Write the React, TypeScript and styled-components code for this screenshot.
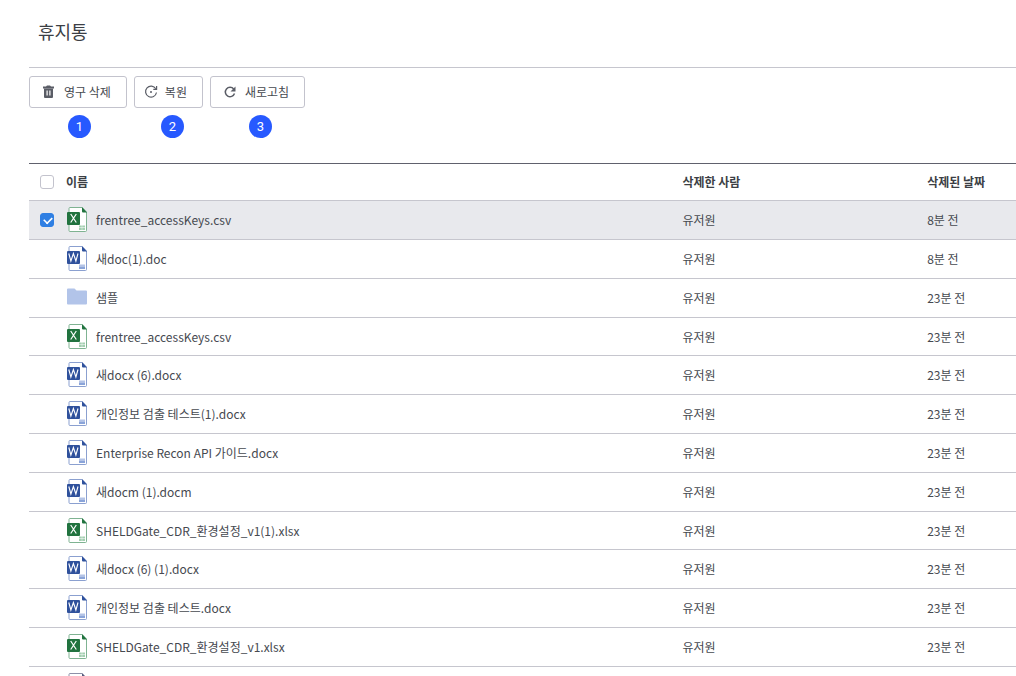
import React, { useState } from "react";
import styled, { createGlobalStyle } from "styled-components";

const GlobalStyle = createGlobalStyle`
  * { box-sizing: border-box; }
  body {
    margin: 0;
    background: #fff;
    color: #464950;
    font-family: "Noto Sans CJK KR", "Noto Sans", sans-serif;
    font-size: 12px;
    line-height: 20px;
  }
`;

const Page = styled.main`
  height: 100vh;
  overflow: hidden;
  padding-left: 29px;
`;

const Header = styled.header`
  height: 68px;
  padding: 17px 9px 0;
  border-bottom: 1px solid #c6c6ce;
`;

const Title = styled.h1`
  margin: 0;
  font-size: 18px;
  font-weight: 400;
  line-height: 28px;
  color: #3c3f45;
`;

const Toolbar = styled.div`
  display: flex;
  gap: 7px;
  padding: 8px 0 55px;
`;

const Action = styled.div`
  position: relative;
`;

const ActionButton = styled.button<{ $inset: number; $gap: number }>`
  display: flex;
  align-items: center;
  gap: ${(p) => p.$gap}px;
  height: 32px;
  padding: 0 15px 0 ${(p) => p.$inset}px;
  border: 1px solid #c3c3cd;
  border-radius: 3px;
  background: #fff;
  color: #464950;
  font: inherit;
  white-space: nowrap;
  cursor: pointer;
`;

const StepBadge = styled.span<{ $left: number }>`
  position: absolute;
  top: 39px;
  left: ${(p) => p.$left}px;
  width: 23px;
  height: 23px;
  border-radius: 50%;
  background: #2759ff;
  color: #fff;
  font-family: Roboto, sans-serif;
  font-size: 13px;
  line-height: 23px;
  text-align: center;
`;

const Table = styled.table`
  width: 100%;
  table-layout: fixed;
  border-collapse: separate;
  border-spacing: 0;
  border-top: 1px solid #60616d;
`;

const HeadCell = styled.th`
  height: 37px;
  padding: 0;
  border-bottom: 1px solid #c6c6ce;
  text-align: left;
  font-weight: 700;
  color: #3c3f45;
`;

const Row = styled.tr<{ $selected: boolean }>`
  height: 39px;
  background: ${(p) => (p.$selected ? "#e8e9ed" : "#fff")};

  &:nth-child(5n + 4) {
    height: 38px;
  }
`;

const Cell = styled.td`
  padding: 0;
  border-bottom: 1px solid #c6c6ce;
  white-space: nowrap;
`;

const NameContent = styled.div`
  display: flex;
  align-items: center;
  gap: 9px;
  padding-left: 1px;
`;

const Check = styled.input<{ $hidden?: boolean }>`
  appearance: none;
  display: block;
  width: 14px;
  height: 14px;
  margin: 0 0 0 11px;
  border: 1px solid #c3c3cd;
  border-radius: 3px;
  background: #fff;
  opacity: ${(p) => (p.$hidden ? 0 : 1)};

  &:checked {
    border-color: #2f7fe3;
    background: #2f7fe3;
  }
  &:checked::after {
    content: "";
    display: block;
    width: 8px;
    height: 5px;
    margin: 2px;
    border: solid #fff;
    border-width: 0 0 2px 2px;
    transform: rotate(-45deg) scale(0.8);
  }
`;

const TrashIcon = () => (
  <svg width="13" height="14" viewBox="0 0 13 14" aria-hidden="true">
    <path d="M1 1.500h3l1-1h3l1 1h3v2H1z" fill="#5a5d66" />
    <path
      fillRule="evenodd"
      d="M2 3.500h9V12q0 1-1 1H3q-1 0-1-1zM4.500 5.500v5h1.200v-5zM7.300 5.500v5h1.200v-5z"
      fill="#5a5d66"
    />
  </svg>
);

const RestoreIcon = () => (
  <svg width="14" height="14" viewBox="0 0 14 14" fill="none" stroke="#5a5d66" aria-hidden="true">
    <path d="M11.800 3.700A5.500 5.500 0 1 0 12.500 7.500" strokeWidth="1.200" />
    <path d="M12.600 1v3.300H9.300" strokeWidth="1.200" />
    <circle cx="7" cy="7" r="1" fill="#5a5d66" stroke="none" />
  </svg>
);

const RefreshIcon = () => (
  <svg width="14" height="14" viewBox="0 0 14 14" fill="none" aria-hidden="true">
    <path d="M10.700 4A4.700 4.700 0 1 0 11.500 8.500" stroke="#5a5d66" strokeWidth="1.500" />
    <path d="M12.500 1.500v5h-5z" fill="#5a5d66" />
  </svg>
);

const FileIcon = styled.svg`
  display: block;
  flex: none;
`;

type Kind = "excel" | "word" | "folder" | "other";

const palette = {
  excel: { main: "#21733f", edge: "#7fb392" },
  word: { main: "#2f519c", edge: "#8ba0d0" },
  other: { main: "#565b7c", edge: "#8d90a8" },
};

const TypeIcon = ({ kind }: { kind: Kind }) => {
  if (kind === "folder") {
    return (
      <FileIcon width="20" height="26" viewBox="0 0 20 26" aria-hidden="true">
        <path d="M0 4.500q0-1 1-1h6.500l2 2H19q1 0 1 1V18.500q0 1-1 1H1q-1 0-1-1z" fill="#b2c4e9" />
      </FileIcon>
    );
  }
  const { main, edge } = palette[kind];
  return (
    <FileIcon width="20" height="26" viewBox="0 0 20 26" aria-hidden="true">
      <path d="M3 .5H15L19.500 5V23.500q0 1-1 1H3q-1 0-1-1V1.500q0-1 1-1z" fill="#fff" stroke={edge} />
      <path d="M15 0l5 5.500h-4q-1 0-1-1z" fill={main} />
      <rect y="5" width="13" height="13" rx="1" fill={main} />
      {kind === "excel" && (
        <>
          <path d="M3.700 7l5.600 8.500M9.300 7l-5.600 8.500" stroke="#fff" strokeWidth="1.200" />
          <path d="M12 18.500h2.800v2H12zM15.200 18.500H18v2h-2.800zM12 21h2.800v2H12zM15.200 21H18v2h-2.800z" fill="#a3cfb1" />
        </>
      )}
      {kind === "word" && (
        <>
          <path d="M1.800 7.500l2.100 7.500 2.500-7.500 2.500 7.500L11 7.500" stroke="#fff" strokeWidth="1.100" fill="none" />
          <path d="M12 18.500h6v2.500h-6z" fill="#b3c3e6" />
          <path d="M12 21h6v2h-6z" fill="#8aa4d9" />
        </>
      )}
    </FileIcon>
  );
};

const files: { name: string; kind: Kind; when: string }[] = [
  { name: "frentree_accessKeys.csv", kind: "excel", when: "8분 전" },
  { name: "새doc(1).doc", kind: "word", when: "8분 전" },
  { name: "샘플", kind: "folder", when: "23분 전" },
  { name: "frentree_accessKeys.csv", kind: "excel", when: "23분 전" },
  { name: "새docx (6).docx", kind: "word", when: "23분 전" },
  { name: "개인정보 검출 테스트(1).docx", kind: "word", when: "23분 전" },
  { name: "Enterprise Recon API 가이드.docx", kind: "word", when: "23분 전" },
  { name: "새docm (1).docm", kind: "word", when: "23분 전" },
  { name: "SHELDGate_CDR_환경설정_v1(1).xlsx", kind: "excel", when: "23분 전" },
  { name: "새docx (6) (1).docx", kind: "word", when: "23분 전" },
  { name: "개인정보 검출 테스트.docx", kind: "word", when: "23분 전" },
  { name: "SHELDGate_CDR_환경설정_v1.xlsx", kind: "excel", when: "23분 전" },
  { name: "", kind: "other", when: "" },
];

export default function App() {
  const [selected, setSelected] = useState<number[]>([0]);
  const toggle = (i: number) =>
    setSelected((s) => (s.includes(i) ? s.filter((n) => n !== i) : [...s, i]));
  const all = selected.length === files.length;

  return (
    <Page>
      <GlobalStyle />
      <Header>
        <Title>휴지통</Title>
      </Header>
      <Toolbar>
        <Action>
          <ActionButton type="button" $inset={12} $gap={9}>
            <TrashIcon />
            영구 삭제
          </ActionButton>
          <StepBadge $left={39}>1</StepBadge>
        </Action>
        <Action>
          <ActionButton type="button" $inset={9} $gap={7}>
            <RestoreIcon />
            복원
          </ActionButton>
          <StepBadge $left={27}>2</StepBadge>
        </Action>
        <Action>
          <ActionButton type="button" $inset={12} $gap={8}>
            <RefreshIcon />
            새로고침
          </ActionButton>
          <StepBadge $left={39}>3</StepBadge>
        </Action>
      </Toolbar>
      <Table>
        <colgroup>
          <col style={{ width: 37 }} />
          <col />
          <col style={{ width: "24.8%" }} />
          <col style={{ width: "9%" }} />
        </colgroup>
        <thead>
          <tr>
            <HeadCell>
              <Check
                type="checkbox"
                aria-label="전체 선택"
                checked={all}
                onChange={() => setSelected(all ? [] : files.map((_, i) => i))}
              />
            </HeadCell>
            <HeadCell scope="col">이름</HeadCell>
            <HeadCell scope="col">삭제한 사람</HeadCell>
            <HeadCell scope="col">삭제된 날짜</HeadCell>
          </tr>
        </thead>
        <tbody>
          {files.map((file, i) => {
            const on = selected.includes(i);
            return (
              <Row key={i} $selected={on}>
                <Cell>
                  <Check
                    type="checkbox"
                    aria-label={`${file.name} 선택`}
                    checked={on}
                    $hidden={!on}
                    onChange={() => toggle(i)}
                  />
                </Cell>
                <Cell>
                  <NameContent>
                    <TypeIcon kind={file.kind} />
                    {file.name}
                  </NameContent>
                </Cell>
                <Cell>{file.name && "유저원"}</Cell>
                <Cell>{file.when}</Cell>
              </Row>
            );
          })}
        </tbody>
      </Table>
    </Page>
  );
}
